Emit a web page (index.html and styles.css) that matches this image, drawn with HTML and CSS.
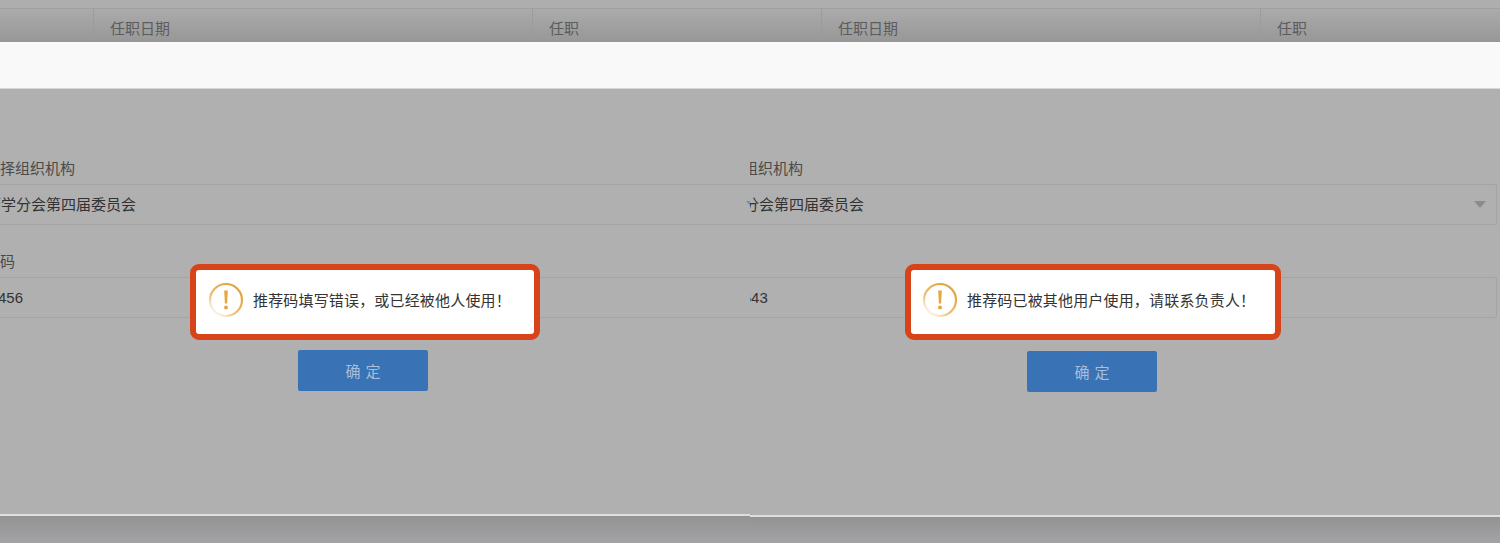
FILE: index.html
```html
<!DOCTYPE html>
<html lang="zh-CN">
<head>
<meta charset="utf-8">
<title>推荐码提示</title>
<link rel="stylesheet" href="styles.css">
</head>
<body>
<main class="shot">
  <section class="panel panel-a">
    <div class="table-head">
      <div class="table-row">
        <div class="cell cell-first"></div>
        <div class="cell cell-date">任职日期</div>
        <div class="cell">任职</div>
      </div>
    </div>
    <div class="band"></div>
    <div class="body">
      <form class="form">
        <div class="label">请选择组织机构</div>
        <div class="field"><span>医药学分会第四届委员会</span><i class="caret"></i></div>
        <div class="label label-next">推荐码</div>
        <div class="field field-code"><span>123456</span></div>
        <div class="actions"><button type="button" class="btn">确定</button></div>
      </form>
    </div>
    <div class="foot"></div>
    <div class="alert">
      <svg class="alert-icon" viewBox="0 0 36 36" aria-hidden="true">
        <defs>
          <linearGradient id="ringA" x1="0.8" y1="0.1" x2="0.2" y2="0.9">
            <stop offset="0" stop-color="#e2a33a"/>
            <stop offset="0.65" stop-color="#ecbd72"/>
            <stop offset="1" stop-color="#fbf0dd"/>
          </linearGradient>
        </defs>
        <circle cx="18" cy="18" r="16" fill="none" stroke="url(#ringA)" stroke-width="2.2"/>
        <path d="M16.2 8.5h3.6l-.7 13h-2.2z" fill="#e6a63a"/>
        <circle cx="18" cy="25.6" r="2" fill="#e6a63a"/>
      </svg>
      <span class="alert-text">推荐码填写错误&#xFF0C;或已经被他人使用&#xFF01;</span>
    </div>
  </section>
  <section class="panel panel-b">
    <div class="table-head">
      <div class="table-row">
        <div class="cell cell-first"></div>
        <div class="cell cell-date">任职日期</div>
        <div class="cell">任职</div>
      </div>
    </div>
    <div class="band"></div>
    <div class="body">
      <form class="form">
        <div class="label">请选择组织机构</div>
        <div class="field"><span>医药学分会第四届委员会</span><i class="caret"></i></div>
        <div class="label label-next">推荐码</div>
        <div class="field field-code"><span>12345643</span></div>
        <div class="actions"><button type="button" class="btn">确定</button></div>
      </form>
    </div>
    <div class="foot"></div>
    <div class="alert">
      <svg class="alert-icon" viewBox="0 0 36 36" aria-hidden="true">
        <defs>
          <linearGradient id="ringB" x1="0.8" y1="0.1" x2="0.2" y2="0.9">
            <stop offset="0" stop-color="#e2a33a"/>
            <stop offset="0.65" stop-color="#ecbd72"/>
            <stop offset="1" stop-color="#fbf0dd"/>
          </linearGradient>
        </defs>
        <circle cx="18" cy="18" r="16" fill="none" stroke="url(#ringB)" stroke-width="2.2"/>
        <path d="M16.2 8.5h3.6l-.7 13h-2.2z" fill="#e6a63a"/>
        <circle cx="18" cy="25.6" r="2" fill="#e6a63a"/>
      </svg>
      <span class="alert-text">推荐码已被其他用户使用&#xFF0C;请联系负责人&#xFF01;</span>
    </div>
  </section>
</main>
</body>
</html>
```
FILE: styles.css
```css
* { box-sizing: border-box; }

html, body {
  margin: 0;
  height: 543px;
  overflow: hidden;
  background: #a0a0a3;
  font-family: "Liberation Sans", "Noto Sans CJK SC", sans-serif;
  font-size: 15px;
}

.shot {
  display: flex;
  width: 1500px;
  height: 543px;
}

.panel {
  position: relative;
  display: flex;
  flex-direction: column;
  width: 750px;
  overflow: hidden;
}

/* dimmed table header behind the dialog */
.table-head {
  flex: none;
  height: 42px;
  overflow: hidden;
  padding-top: 8px;
  background: #aeaeae;
}

.table-row {
  display: flex;
  height: 40px;
  border-top: 1px solid #a0a0a0;
  background: linear-gradient(#ababab, #979797 85%);
  color: #5c5c5c;
  line-height: 40px;
}

.cell {
  flex: none;
  padding-left: 16px;
}

.cell-first {
  border-right: 1px solid #9c9c9c;
}

.cell-date {
  width: 439px;
  border-right: 1px solid #9c9c9c;
}

.panel-a .cell-first { width: 94px; }
.panel-b .cell-first { width: 72px; }

.band {
  flex: none;
  height: 47px;
  background: #f9f9f9;
  border-top: 1px solid #fbfbfb;
  border-bottom: 1px solid #d8d8d8;
}

.body {
  flex: none;
  padding-top: 69px;
  background: #b0b0b0;
  border-bottom: 2px solid #dedede;
}

.panel-a .body { height: 427px; }
.panel-b .body { height: 428px; }

.form {
  width: 810px;
}

.panel-a .form { margin-left: -41px; }
.panel-b .form { margin-left: -63px; }

.label {
  height: 26px;
  padding-left: 11px;
  color: #4a4a4a;
  line-height: 22px;
}

.label-next {
  margin-top: 26px;
}

.field {
  display: flex;
  align-items: center;
  justify-content: space-between;
  height: 41px;
  padding: 0 10px 0 11px;
  border: 1px solid #a4a4a4;
  border-radius: 2px;
  color: #333;
  line-height: 39px;
}

.field-code {
  padding-left: 13px;
}

.caret {
  width: 0;
  height: 0;
  border-left: 6px solid transparent;
  border-right: 6px solid transparent;
  border-top: 7px solid #8b8b8b;
}

.actions {
  display: flex;
  justify-content: center;
  margin-top: 32px;
}

.panel-a .actions { padding-right: 2px; }
.panel-b .actions { margin-top: 33px; }

.btn {
  width: 130px;
  height: 41px;
  padding: 0 0 0 5px;
  border: 0;
  border-radius: 2px;
  background: #3a72b6;
  color: #a9bfd9;
  font: inherit;
  letter-spacing: 5px;
}

/* highlighted alert over the dialog */
.alert {
  position: absolute;
  top: 264px;
  display: flex;
  align-items: center;
  height: 76px;
  padding: 0 0 4px 13px;
  border: 6px solid #d8431a;
  border-radius: 9px;
  background: #fff;
}

.panel-a .alert { left: 190px; width: 350px; }
.panel-b .alert { left: 155px; width: 376px; padding-left: 12px; }

.alert-icon {
  flex: none;
  width: 36px;
  height: 36px;
  margin-left: -1px;
}

.alert-text {
  margin-left: 9px;
  padding-bottom: 2px;
  color: #333;
  letter-spacing: 0.17px;
  white-space: nowrap;
}

.foot {
  flex: 1;
  background: linear-gradient(#939393, #a3a3a7);
}
```
